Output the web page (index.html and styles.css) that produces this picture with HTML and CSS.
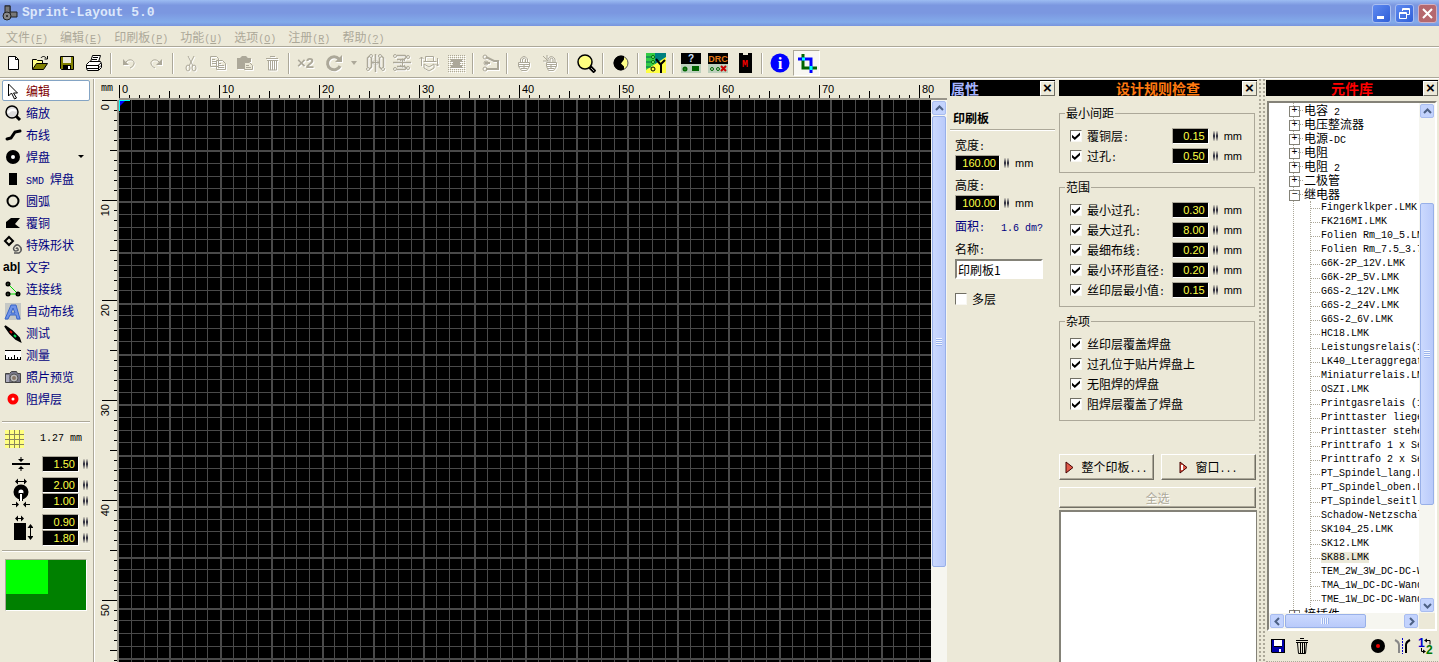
FILE: index.html
```html
<!DOCTYPE html>
<html lang="zh-CN">
<head>
<meta charset="utf-8">
<title>Sprint-Layout 5.0</title>
<link rel="stylesheet" href="styles.css">
</head>
<body>
<div class="app">
  <header class="titlebar">
    <svg class="app-icon" width="16" height="16" viewBox="0 0 16 16"><path d="M3 1h5v6h7v5H8" fill="#777" stroke="#222"/><rect x="3" y="1" width="5" height="8" fill="#777" stroke="#222"/><circle cx="5" cy="11" r="4" fill="#888" stroke="#222"/><circle cx="5" cy="11" r="1" fill="#222"/></svg>
    <h1>Sprint-Layout 5.0</h1>
    <div class="window-buttons">
      <button aria-label="最小化"><svg width="17" height="17"><path d="M4 11h7v3H4z" fill="#fff"/></svg></button>
      <button aria-label="还原"><svg width="17" height="17" fill="none" stroke="#fff"><path d="M6.500 6V3.500h7v6H11M6 4.500h8M3.500 7.500h7v6h-7zM3 8.500h8"/></svg></button>
      <button class="win-close" aria-label="关闭"><svg width="17" height="17" stroke="#fff" stroke-width="2"><path d="M4 4l9 9M13 4l-9 9"/></svg></button>
    </div>
  </header>

  <nav class="menubar">
    <button>文件<span class="lat">(<u>F</u>)</span></button>
    <button>编辑<span class="lat">(<u>E</u>)</span></button>
    <button>印刷板<span class="lat">(<u>P</u>)</span></button>
    <button>功能<span class="lat">(<u>U</u>)</span></button>
    <button>选项<span class="lat">(<u>O</u>)</span></button>
    <button>注册<span class="lat">(<u>R</u>)</span></button>
    <button>帮助<span class="lat">(<u>?</u>)</span></button>
  </nav>

  <div class="toolbar">
    <button aria-label="新建"><svg viewBox="0 0 20 20"><path d="M5.500 3.500h7l3 3v10h-10z" fill="#fff" stroke="#000"/><path d="M12.500 3.500v3h3" fill="none" stroke="#000"/></svg></button>
    <button aria-label="打开"><svg viewBox="0 0 20 20"><path d="M2.500 16V6.500h4l1 1h5v3" fill="#ff8" stroke="#000"/><path d="M2.500 16.500l4-6h11l-4 6z" fill="#808000" stroke="#000"/><path d="M11 5c1-2 4-2 5 0M17.500 3v3h-3" fill="none" stroke="#000"/></svg></button>
    <button aria-label="保存"><svg viewBox="0 0 20 20"><path d="M3.500 3.500h13v13h-12l-1-1z" fill="#808000" stroke="#000"/><path d="M6 4h8v6H6z" fill="#ece9d8"/><path d="M6 12h8v4H6z"/><path d="M11 13h2v3h-2z" fill="#fff"/></svg></button>
    <button aria-label="打印"><svg viewBox="0 0 20 20" stroke="#000"><path d="M6.500 9l2-6.500h8l-2 6.500" fill="#fff"/><path d="M2.500 11.500l3-3h11l1 2v4l-3 3h-11l-1-2z" fill="#fff"/><path d="M3 12.500h11l3-2.500M3 15.500h11l3-3M14.500 12v5M9 4.500h5M8 6.500h5" fill="none"/></svg></button>
    <span class="sep"></span>
    <button disabled aria-label="撤销"><svg class="off" viewBox="0 0 20 20"><path d="M4 6v6h6z" fill="#aca899"/><path d="M7 9c3-4 9-2 8 2q-1 3-4 4" class="ln"/></svg></button>
    <button disabled aria-label="重做"><svg class="off" viewBox="0 0 20 20"><path d="M16 6v6h-6z" fill="#aca899"/><path d="M13 9C10 5 4 7 5 11q1 3 4 4" class="ln"/></svg></button>
    <span class="sep"></span>
    <button disabled aria-label="剪切"><svg class="off" viewBox="0 0 20 20"><path d="M7 3l5 10M13 3L8 13" class="ln"/><ellipse cx="7" cy="15" rx="2" ry="3" class="ln"/><ellipse cx="13" cy="15" rx="2" ry="3" class="ln"/></svg></button>
    <button disabled aria-label="复制"><svg class="off" viewBox="0 0 20 20"><path d="M2.500 3.500h6l2 2v8h-8zM8.500 7.500h6l3 3v6h-9zM4 6.500h3M4 8.500h4M4 10.500h4M10 10.500h3M10 12.500h6M10 14.500h6" class="ln"/></svg></button>
    <button disabled aria-label="粘贴"><svg class="off" viewBox="0 0 20 20"><path d="M2 5h3l2-2h4l2 2h3v4h-5v7H2z" fill="#aca899"/><path d="M9.500 9.500h5l3 3v4h-8z" fill="#ece9d8" stroke="#aca899"/><path d="M11 12.500h3M11 14.500h5" class="ln"/></svg></button>
    <button disabled aria-label="删除"><svg class="off" viewBox="0 0 20 20"><path d="M8 3.500h5M4 5.500h12M5 7.500h11M6.500 8v9h8V8M8.500 8v9M10.500 8v9M12.500 8v9" class="ln"/></svg></button>
    <span class="sep"></span>
    <button disabled aria-label="复制两份"><svg class="off" viewBox="0 0 20 20"><text x="0" y="15" class="x2">×2</text></svg></button>
    <button disabled aria-label="旋转"><svg class="off" viewBox="0 0 20 20"><path d="M15 6a6.500 6.500 0 1 0 1 7" class="ln" stroke-width="3"/><path d="M11 9h7V2z" fill="#aca899"/></svg></button>
    <button disabled class="drop" aria-label="旋转选项"><svg viewBox="0 0 8 20"><path d="M1 8h6l-3 4z" fill="#aca899"/></svg></button>
    <button disabled aria-label="水平镜像"><svg class="off" viewBox="0 0 20 20"><path d="M10.500 1v18M2.500 14V5l2-2M6.500 5v9l-2 2M18.500 14V5l-2-2M14.500 5v9l2 2" class="ln" stroke-width="1.500"/><path d="M7 9.500h7M9 7.500l-2 2 2 2M12 7.500l2 2-2 2" class="ln"/><circle cx="6" cy="3" r="1.500" class="ln"/><circle cx="15" cy="3" r="1.500" class="ln"/><circle cx="3" cy="16" r="1.500" class="ln"/><circle cx="18" cy="16" r="1.500" class="ln"/></svg></button>
    <button disabled aria-label="垂直镜像"><svg class="off" viewBox="0 0 20 20"><path d="M1 9.500h18M5 2.500h8l2 2M5 6.500h7l2-2M5 16.500h8l2-2M5 13.500h7l2 1" class="ln" stroke-width="1.500"/><path d="M10.500 6v8M8 8l2.500-2 2.500 2M8 12l2.500 2 2.500-2" class="ln"/><circle cx="3" cy="3" r="1.500" class="ln"/><circle cx="16" cy="4" r="1.500" class="ln"/><circle cx="3" cy="16" r="1.500" class="ln"/><circle cx="16" cy="15" r="1.500" class="ln"/></svg></button>
    <button disabled aria-label="换面"><svg class="off" viewBox="0 0 20 20"><path d="M6.500 3.500h8v5h-8zM2.500 13V4M.5 6l2-2 2 2M18.500 5v8M16.500 11l2 2 2-2M4.500 8.500h3M13.500 8.500h4M5 11l5 3 5-3v4l-5 3-5-3z" class="ln"/></svg></button>
    <button disabled aria-label="阵列"><svg class="off" viewBox="0 0 20 20"><path d="M2 2.500h17M2 4.500h17M2 6.500h17M2 8.500h17M2 10.500h17M2 12.500h17M2 14.500h17M2 16.500h17M2 18.500h17" stroke="#aca899" stroke-dasharray="1 1"/><path d="M5 6h11v3H5zM5 12h11v3H5z" fill="#aca899"/><path d="M7 9h7v3H7z" fill="#aca899"/></svg></button>
    <span class="sep"></span>
    <button disabled aria-label="自动连线"><svg class="off" viewBox="0 0 20 20"><path d="M5 4l8 4h4v8H5M4 10h5" class="ln" stroke-width="2"/><circle cx="4" cy="4" r="2" class="ln"/><circle cx="5" cy="10" r="2" class="ln"/><circle cx="4" cy="16" r="2" class="ln"/></svg></button>
    <span class="sep narrow"></span>
    <button disabled aria-label="锁定"><svg class="off" viewBox="0 0 20 20"><path d="M6.500 9V6q3.500-5 7 0v3M8.500 9V6q2-2 3 0v3M4.500 9.500h11v4l-3 4h-5l-3-4zM5 11.500h10M5 13.500h10M7 15.500h6M10 11v4" class="ln"/></svg></button>
    <button disabled aria-label="解锁"><svg class="off" viewBox="0 0 20 20"><path d="M7 9V6q3-5 7 0v3M9 9V6q2-2 3 0v3M5.500 9.500h10v4l-3 4h-5l-2-4zM6 11.500h9M6 13.500h9M7 15.500h6M10 11v4M2 3l5 5M2 8h4M6 2v4" class="ln"/></svg></button>
    <span class="sep"></span>
    <button aria-label="缩放"><svg viewBox="0 0 20 20"><path d="M14 14l5 5" stroke="#000" stroke-width="4"/><path d="M15 15l3 3" stroke="#aaa"/><circle cx="9" cy="9" r="7" fill="#ffff80" stroke="#000" stroke-width="1.500"/></svg></button>
    <span class="sep"></span>
    <button aria-label="对比度"><svg viewBox="0 0 20 20"><circle cx="10" cy="10" r="7" fill="#ff8" stroke="#555"/><path d="M10 2.500a7.500 7.500 0 1 0 0 15l3-1v-3l-3-3 3-4V3z"/></svg></button>
    <span class="sep"></span>
    <button aria-label="自动布线"><svg viewBox="0 0 20 20"><path d="M0 0h20v20H0z" fill="#008080"/><path d="M0 0h9v12l-9 8z" fill="#3c4"/><path d="M20 4v16H0v-3z" fill="#ff4"/><path d="M0 4h5M0 9h5M0 14h5" stroke="#065"/><path d="M19 7l-4 4v9" stroke="#000" stroke-width="2" fill="none"/><circle cx="7" cy="4" r="1.500" fill="#8f8" stroke="#060"/><circle cx="7" cy="9" r="1.500" fill="#8f8" stroke="#060"/><circle cx="7" cy="16" r="2" fill="#ff4" stroke="#000"/><path d="M10 6l5 6" stroke="#000" stroke-width="2"/></svg></button>
    <span class="sep"></span>
    <button aria-label="属性"><svg viewBox="0 0 20 20"><path d="M0 0h20v11H0z"/><path d="M0 11h20v9H0z" fill="#bcd0bc"/><text x="7" y="9" class="ico-q">?</text><circle cx="4" cy="16" r="1.500" fill="none" stroke="#060" stroke-width="2"/><path d="M11 13h7v5h-7z" fill="#006400"/></svg></button>
    <button aria-label="设计规则检查"><svg viewBox="0 0 20 20"><path d="M0 0h20v11H0z"/><path d="M0 11h20v9H0z" fill="#bcd0bc"/><text x="10" y="9" class="ico-drc">DRC</text><circle cx="4" cy="16" r="1.500" fill="none" stroke="#060"/><circle cx="10" cy="16" r="1.500" fill="none" stroke="#060"/><path d="M13 13l5 5M18 13l-5 5" stroke="#c00" stroke-width="2"/></svg></button>
    <button aria-label="元件库"><svg viewBox="0 0 20 20"><path d="M4 0h4v2h5V0h4v20H4z"/><text x="10" y="14" class="ico-m">M</text></svg></button>
    <span class="sep"></span>
    <button aria-label="信息"><svg viewBox="0 0 20 20"><circle cx="10" cy="10" r="9.500" fill="#00f"/><text x="10" y="16" class="ico-i">i</text></svg></button>
    <button class="pressed" aria-label="准线"><svg viewBox="0 0 20 20" fill="none" stroke-width="3"><path d="M6 1v14h14" stroke="#006400"/><path d="M1 6h13v14" stroke="#00f"/><path d="M5 6h3M14 13v4" stroke="#0ff"/></svg></button>
  </div>

  <main class="workspace">
    <aside class="palette">
      <div class="tools">
        <button class="active"><svg viewBox="0 0 20 20"><path d="M5.500 3v12l3-3 3 6 2-1-3-5h4z" fill="#fff" stroke="#000"/></svg>编辑</button>
        <button><svg viewBox="0 0 20 20"><path d="M12 12l5 5" stroke="#000" stroke-width="3"/><circle cx="9" cy="9" r="6" fill="#ddd" stroke="#000" stroke-width="1.500"/><path d="M5 10q3-5 8-2" stroke="#fff" stroke-width="2" fill="none"/></svg>缩放</button>
        <button><svg viewBox="0 0 20 20"><path d="M4 14l4-1 4-6 5-1" fill="none" stroke="#000" stroke-width="3" stroke-linecap="round"/></svg>布线</button>
        <button><svg viewBox="0 0 20 20"><circle cx="10" cy="10" r="4.500" fill="#fff" stroke="#000" stroke-width="5"/></svg>焊盘<svg class="caret" viewBox="0 0 8 6"><path d="M1 1h6L4 4z"/></svg></button>
        <button><svg viewBox="0 0 20 20"><path d="M6 4h8v12H6z"/></svg><span><span class="lat">SMD&nbsp;</span>焊盘</span></button>
        <button><svg viewBox="0 0 20 20"><circle cx="10" cy="10" r="5.500" fill="none" stroke="#000" stroke-width="2"/></svg>圆弧</button>
        <button><svg viewBox="0 0 20 20"><path d="M3 9l5-4h9l-5 6 5 4H3z"/></svg>覆铜</button>
        <button><svg viewBox="0 0 20 20" fill="none" stroke="#000"><path d="M6 2l4 4-4 4-4-4z" stroke-width="2"/><path d="M13 14q1-2 2 0t-3 2q-3-2 0-5t6 2q1 3-2 5h-5" stroke="#555" stroke-width="1.500"/></svg>特殊形状</button>
        <button><svg viewBox="0 0 20 20"><text x="0" y="14" class="ico-ab">ab|</text></svg>文字</button>
        <button><svg viewBox="0 0 20 20" fill="none"><path d="M5 5l10 10H5" stroke="#0d0"/><g stroke="#000" stroke-width="2"><circle cx="5" cy="5" r="1.500"/><circle cx="5" cy="15" r="1.500"/><circle cx="15" cy="15" r="1.500"/></g></svg>连接线</button>
        <button><svg viewBox="0 0 20 20"><path d="M2 2h16v17H2z" fill="#c5c8c5"/><path d="M8 4h5l4 14h-3l-1-4H7l-2 4H2zM10 7l-2 5h4z" fill="#6f93e8" stroke="#3764c8"/></svg>自动布线</button>
        <button><svg viewBox="0 0 20 20"><path d="M2 3l7 5 7 7 1 3-4-2-6-6z" stroke="#000" stroke-width="2"/><path d="M7 8l2 2" stroke="#d00" stroke-width="2"/><path d="M11 12l2 2" stroke="#0d5" stroke-width="2"/></svg>测试</button>
        <button><svg viewBox="0 0 20 20"><path d="M2 5h16v9H2z" fill="#fff"/><path d="M2 5.500h16M2 14.500h16M2.500 10v4M5.500 12v2M8.500 12v2M11.500 10v4M14.500 12v2M17.500 12v2" stroke="#000"/></svg>测量</button>
        <button><svg viewBox="0 0 20 20"><path d="M2.500 6.500h4l2-2h5l1 2h3v9h-15z" fill="#778" stroke="#444"/><circle cx="11" cy="11" r="4" fill="#bbb" stroke="#555"/><circle cx="11" cy="11" r="2" fill="#876"/><path d="M3 8h3v7H3z" fill="#aab"/></svg>照片预览</button>
        <button><svg viewBox="0 0 20 20"><circle cx="10" cy="10" r="3.500" fill="#fff" stroke="#f00" stroke-width="4"/></svg>阻焊层</button>
      </div>
      <div class="grid-setting">
        <svg width="20" height="20" viewBox="0 0 20 20"><path d="M0 1h19v18H0z" fill="#ffff80"/><path d="M0 5.500h19M0 10.500h19M0 15.500h19M4.500 1v18M9.500 1v18M14.500 1v18" stroke="#8a865c"/></svg>
        <span class="lat">1.27 mm</span>
      </div>
      <div class="sizes">
        <div class="size-row">
          <svg viewBox="0 0 24 16"><path d="M3 8h18" stroke="#000" stroke-width="2"/><path d="M12 1v3M12 12v3" stroke="#000"/><path d="M9 3h6l-3 3zM9 13h6l-3-3z"/></svg>
          <div><span class="num"><input value="1.50" aria-label="线宽"><i class="spin"></i></span></div>
        </div>
        <div class="size-row">
          <svg viewBox="0 0 24 32"><path d="M7 4.500h10M3 27.500h5M16 27.500h5" stroke="#000"/><path d="M6 4.500l3-3v6zM18 4.500l-3-3v6zM10 27.500l-3-3v6zM14 27.500l3-3v6z"/><circle cx="12" cy="15" r="5" fill="#fff" stroke="#000" stroke-width="5"/><path d="M10 16h4v8h-4z"/><path d="M11 17h2v7h-2z" fill="#fff"/></svg>
          <div><span class="num"><input value="2.00" aria-label="焊盘外径"><i class="spin"></i></span><span class="num"><input value="1.00" aria-label="焊盘内径"><i class="spin"></i></span></div>
        </div>
        <div class="size-row">
          <svg viewBox="0 0 24 32"><path d="M5 9h12v17H5zM6 4.500l3-3v6zM15 4.500l-3-3v6zM21.500 10l-3 4h6zM21.500 26l-3-4h6z"/><path d="M7 4.500h7M21.500 13v11" stroke="#000"/></svg>
          <div><span class="num"><input value="0.90" aria-label="贴片宽度"><i class="spin"></i></span><span class="num"><input value="1.80" aria-label="贴片高度"><i class="spin"></i></span></div>
        </div>
      </div>
      <div class="overview"><div class="overview-view"></div></div>
    </aside>

    <section class="editor">
      <div class="corner lat">mm</div>
      <div class="ruler-top"><svg id="ruler-x"></svg></div>
      <div class="ruler-left"><svg id="ruler-y"></svg></div>
      <div class="board"><svg id="grid"></svg></div>
      <div class="vscroll canvas-scroll">
        <button aria-label="向上"><svg viewBox="0 0 9 9"><path d="M1 6l3.500-3.500L8 6"/></svg></button>
        <div class="track"><div class="thumb"></div></div>
      </div>
    </section>

    <section class="panel props">
      <div class="panel-head"><h2>属性</h2><button aria-label="关闭属性">×</button></div>
      <h3>印刷板</h3>
      <div class="props-body">
        <label for="bw">宽度<span class="lat">:</span></label>
        <div class="num wide"><input id="bw" value="160.00"><i class="spin"></i><span>mm</span></div>
        <label for="bh">高度<span class="lat">:</span></label>
        <div class="num wide"><input id="bh" value="100.00"><i class="spin"></i><span>mm</span></div>
        <p class="area"><span>面积<span class="lat">:</span></span><span class="lat">1.6 dm?</span></p>
        <label for="bn">名称<span class="lat">:</span></label>
        <input class="name" id="bn" value="印刷板1">
        <label class="check"><input type="checkbox">多层</label>
      </div>
    </section>

    <section class="panel drc">
      <div class="panel-head"><h2>设计规则检查</h2><button aria-label="关闭设计规则检查">×</button></div>
      <div class="groups">
        <fieldset><legend>最小间距</legend>
          <div class="rule"><label class="check"><input type="checkbox" checked><span>覆铜层<span class="lat">:</span></span></label><span class="num"><input value="0.15" aria-label="覆铜层"><i class="spin"></i><span>mm</span></span></div>
          <div class="rule"><label class="check"><input type="checkbox" checked><span>过孔<span class="lat">:</span></span></label><span class="num"><input value="0.50" aria-label="过孔"><i class="spin"></i><span>mm</span></span></div>
        </fieldset>
        <fieldset><legend>范围</legend>
          <div class="rule"><label class="check"><input type="checkbox" checked><span>最小过孔<span class="lat">:</span></span></label><span class="num"><input value="0.30" aria-label="最小过孔"><i class="spin"></i><span>mm</span></span></div>
          <div class="rule"><label class="check"><input type="checkbox" checked><span>最大过孔<span class="lat">:</span></span></label><span class="num"><input value="8.00" aria-label="最大过孔"><i class="spin"></i><span>mm</span></span></div>
          <div class="rule"><label class="check"><input type="checkbox" checked><span>最细布线<span class="lat">:</span></span></label><span class="num"><input value="0.20" aria-label="最细布线"><i class="spin"></i><span>mm</span></span></div>
          <div class="rule"><label class="check"><input type="checkbox" checked><span>最小环形直径<span class="lat">:</span></span></label><span class="num"><input value="0.20" aria-label="最小环形直径"><i class="spin"></i><span>mm</span></span></div>
          <div class="rule"><label class="check"><input type="checkbox" checked><span>丝印层最小值<span class="lat">:</span></span></label><span class="num"><input value="0.15" aria-label="丝印层最小值"><i class="spin"></i><span>mm</span></span></div>
        </fieldset>
        <fieldset><legend>杂项</legend>
          <div class="rule"><label class="check"><input type="checkbox" checked>丝印层覆盖焊盘</label></div>
          <div class="rule"><label class="check"><input type="checkbox" checked>过孔位于贴片焊盘上</label></div>
          <div class="rule"><label class="check"><input type="checkbox" checked>无阻焊的焊盘</label></div>
          <div class="rule"><label class="check"><input type="checkbox" checked>阻焊层覆盖了焊盘</label></div>
        </fieldset>
      </div>
      <div class="actions">
        <button><svg width="9" height="13" viewBox="0 0 9 13"><path d="M1 1l7 5.500L1 12z" fill="#e05a48" stroke="#400"/></svg><span>整个印板<span class="lat">...</span></span></button>
        <button><svg width="9" height="13" viewBox="0 0 9 13"><path d="M1 1l7 5.500L1 12z" fill="#e05a48" stroke="#400"/><path d="M3 4v5" stroke="#fff" stroke-width="2"/></svg><span>窗口<span class="lat">...</span></span></button>
        <button class="all" disabled>全选</button>
      </div>
      <div class="results"></div>
    </section>

    <div class="splitter"></div>

    <section class="panel library">
      <div class="panel-head"><h2>元件库</h2><button aria-label="关闭元件库">×</button></div>
      <div class="tree-box">
        <ul class="tree">
          <li>电容<span class="lat">&nbsp;2</span></li>
          <li>电压整流器</li>
          <li>电源<span class="lat">-DC</span></li>
          <li>电阻</li>
          <li>电阻<span class="lat">&nbsp;2</span></li>
          <li>二极管</li>
          <li class="open">继电器
            <ul>
              <li>Fingerklkper.LMK</li>
              <li>FK216MI.LMK</li>
              <li>Folien Rm_10_5.LMK</li>
              <li>Folien Rm_7.5_3.7.LMK</li>
              <li>G6K-2P_12V.LMK</li>
              <li>G6K-2P_5V.LMK</li>
              <li>G6S-2_12V.LMK</li>
              <li>G6S-2_24V.LMK</li>
              <li>G6S-2_6V.LMK</li>
              <li>HC18.LMK</li>
              <li>Leistungsrelais(1).LMK</li>
              <li>LK40_Lteraggregat.LMK</li>
              <li>Miniaturrelais.LMK</li>
              <li>OSZI.LMK</li>
              <li>Printgasrelais (1).LMK</li>
              <li>Printtaster liegend.LMK</li>
              <li>Printtaster stehend.LMK</li>
              <li>Printtrafo 1 x Sek.LMK</li>
              <li>Printtrafo 2 x Sek.LMK</li>
              <li>PT_Spindel_lang.LMK</li>
              <li>PT_Spindel_oben.LMK</li>
              <li>PT_Spindel_seitl.LMK</li>
              <li>Schadow-Netzschalter.LMK</li>
              <li>SK104_25.LMK</li>
              <li>SK12.LMK</li>
              <li><span class="selected">SK88.LMK</span></li>
              <li>TEM_2W_3W_DC-DC-Wandler.LMK</li>
              <li>TMA_1W_DC-DC-Wandler.LMK</li>
              <li>TME_1W_DC-DC-Wandler.LMK</li>
            </ul>
          </li>
          <li>接插件</li>
        </ul>
        <div class="vscroll tree-scroll">
          <button aria-label="向上"><svg viewBox="0 0 9 9"><path d="M1 6l3.500-3.500L8 6"/></svg></button>
          <div class="track"><div class="thumb"></div></div>
          <button aria-label="向下"><svg viewBox="0 0 9 9"><path d="M1 3l3.500 3.500L8 3"/></svg></button>
        </div>
        <div class="hscroll">
          <button aria-label="向左"><svg viewBox="0 0 9 9"><path d="M6 1L2.500 4.500 6 8"/></svg></button>
          <div class="track"><div class="thumb"></div></div>
          <button aria-label="向右"><svg viewBox="0 0 9 9"><path d="M3 1l3.500 3.500L3 8"/></svg></button>
        </div>
        <div class="scroll-corner"></div>
      </div>
      <div class="library-tools">
        <button aria-label="保存元件"><svg viewBox="0 0 20 20"><path d="M3 3h14v14H4l-1-1z"/><path d="M4 4h2v7h8V4h2v12H4z" fill="#00a"/><path d="M6 4h8v6H6zM11 13h2v3h-2z" fill="#fff"/></svg></button>
        <button aria-label="删除元件"><svg viewBox="0 0 20 20" fill="none" stroke="#000"><path d="M8 2.500h4M4 4.500h12M4 6.500h12M5.500 7l1 10.500h7l1-10.500M8.500 7v10M10.500 7v10M12.500 7v10"/></svg></button>
        <span class="grow"></span>
        <button aria-label="圆点"><svg viewBox="0 0 20 20"><circle cx="10" cy="10" r="7"/><circle cx="10" cy="10" r="2" fill="#e00"/></svg></button>
        <button aria-label="镜像"><svg viewBox="0 0 20 20" fill="none"><path d="M3 4q4 2 4 5v8" stroke="#888" stroke-width="2"/><path d="M18 4q-4 2-4 5v8" stroke="#000" stroke-width="2"/><path d="M10.500 2v16" stroke="#00c" stroke-dasharray="2 1"/></svg></button>
        <button aria-label="换面元件"><svg viewBox="0 0 20 20"><text x="2" y="11" class="ico-1">1</text><text x="10" y="18" class="ico-2">2</text><path d="M10 4.500h4v4M5.500 12v3.500h3" fill="none" stroke="#000"/><path d="M8 4.500l3-2v4zM10 15.500l-3-2v4z"/></svg></button>
      </div>
    </section>
  </main>
</div>
<script src="board.js"></script>
</body>
</html>
```

FILE: styles.css
```css
* { box-sizing: border-box; }
body {
  margin: 0;
  background: #ece9d8;
  color: #000;
  font: 12px/14px "Noto Sans CJK SC", "Liberation Sans", sans-serif;
  overflow: hidden;
}
button, input { font: inherit; color: inherit; margin: 0; }
button { padding: 0; border: 0; background: none; }
h1, h2, h3, p, ul { margin: 0; padding: 0; }
svg { display: block; flex: none; }
.lat { font-family: "Liberation Mono", monospace; font-size: 10px; }
span.lat { line-height: 0; }
.app { height: 100vh; display: flex; flex-direction: column; }

/* Title bar */
.titlebar {
  height: 26px; flex: none; display: flex; align-items: center; gap: 4px;
  padding: 0 2px;
  background: linear-gradient(#9cbcf2, #7b97e0 20%, #7b97e0 50%, #83abea 85%, #7894dd);
}
.titlebar h1 { flex: 1; color: #dce8fb; font: bold 13px/16px "Liberation Mono", monospace; }
.window-buttons { display: flex; gap: 4px; }
.window-buttons button {
  width: 19px; height: 19px; border: 1px solid #a9bef0; border-radius: 3px;
  background: linear-gradient(135deg, #5f8af0, #2f5fd8);
}
.window-buttons .win-close { background: #b5686e; border-color: #d0b0c4; }

/* Menu and toolbar */
.menubar {
  height: 22px; flex: none; display: flex; align-items: center; gap: 12px;
  padding: 0 6px; color: #aca899;
  border-bottom: 1px solid #fff; box-shadow: inset 0 -1px #aca899;
}
.toolbar {
  height: 31px; flex: none; display: flex; align-items: center; margin-left: -1px;
  border-bottom: 1px solid #fff; box-shadow: inset 0 -1px #aca899;
}
.toolbar button { width: 27px; height: 26px; display: flex; align-items: center; justify-content: center; flex: none; }
.toolbar svg { width: 20px; height: 20px; }
.toolbar .drop { width: 14px; }
.toolbar .drop svg { width: 8px; }
.toolbar .pressed { background: #f8f7f2; border: 1px solid; border-color: #aca899 #fff #fff #aca899; }
.sep { width: 8px; height: 21px; flex: none; background: linear-gradient(90deg, #aca899 50%, #fff 50%) center / 2px 100% no-repeat; }
.sep.narrow { width: 6px; }
.off { filter: drop-shadow(1px 1px 0 #fff); }
.ln { fill: none; stroke: #aca899; }
.x2 { font: bold 15px "Liberation Sans"; fill: #aca899; }
.ico-q { font: bold 10px "Liberation Sans"; fill: #cfe0ff; }
.ico-drc { font: bold 9px "Liberation Sans"; fill: #e07818; text-anchor: middle; }
.ico-m { font: bold 10px "Liberation Mono"; fill: #e00; text-anchor: middle; }
.ico-i { font: bold 17px "Liberation Serif"; fill: #fff; text-anchor: middle; }
.ico-ab { font: bold 12px "Liberation Sans"; }
.ico-1 { font: bold 12px "Liberation Sans"; fill: #00c; }
.ico-2 { font: bold 12px "Liberation Sans"; fill: #070; }

.workspace { flex: 1; min-height: 0; display: flex; }

/* Left palette */
.palette { width: 95px; flex: none; padding: 1px 4px 0 2px; border-right: 1px solid #fff; box-shadow: inset -1px 0 #aca899; }
.tools { display: flex; flex-direction: column; gap: 1px; }
.tools button {
  height: 21px; display: flex; align-items: center; width: 88px;
  color: #000080; border: 1px solid transparent; border-radius: 2px;
}
.tools svg { width: 20px; height: 20px; margin-right: 3px; }
.tools .caret { width: 8px; height: 6px; margin: 0 4px 0 auto; }
.tools .active { background: #fff; border-color: #84a4c4; color: #800000; }
.grid-setting {
  margin-top: 12px; height: 31px; display: flex; align-items: center; justify-content: space-between;
  padding: 3px 8px 0 3px; border-top: 1px solid #aca899; box-shadow: inset 0 1px #fff;
}
.sizes { display: flex; flex-direction: column; gap: 5px; padding: 4px 0; border-bottom: 1px solid #aca899; box-shadow: 0 1px #fff; }
.size-row { display: flex; justify-content: space-between; padding: 0 2px 0 7px; }
.size-row > svg { width: 24px; }
.num { display: flex; align-items: center; font: 11px/14px "Liberation Sans", sans-serif; }
.num input {
  width: 37px; height: 16px; padding: 0 3px 0 0; text-align: right;
  background: #000; color: #ff4; border: 1px solid; border-color: #aca899 #fff #fff #aca899;
}
.spin {
  width: 5px; height: 10px; margin-left: 4px; flex: none;
  background:
    linear-gradient(#d8d5c6, #223 50%, #d8d5c6) 0 0 / 2px 100% no-repeat,
    linear-gradient(#d8d5c6, #223 50%, #d8d5c6) 3px 0 / 2px 100% no-repeat;
}
.overview { margin: 8px 3px 0 3px; height: 52px; background: #008000; border: 1px solid; border-color: #aca899 #fff #fff #aca899; }
.overview-view { width: 52%; height: 68%; background: #0f0; }

/* Rulers and board */
.editor { flex: 1; min-width: 0; display: grid; grid-template: 21px 1fr / 24px 1fr 16px; padding-right: 3px; }
.editor svg text { font: 11px "Liberation Sans", sans-serif; }
.corner { padding: 3px 0 0 6px; }
.ruler-top { grid-column: 2 / 4; border-bottom: 2px solid #98958a; overflow: hidden; }
.ruler-left { border-right: 2px solid #98958a; overflow: hidden; }
.ruler-top svg, .ruler-left svg, .board svg { width: 100%; height: 100%; }
.board { background: #000; overflow: hidden; min-height: 0; }

/* Scroll bars */
.vscroll, .hscroll { display: flex; background: #f6f6f0; padding: 1px; gap: 1px; }
.vscroll { flex-direction: column; }
.vscroll button, .hscroll button {
  width: 14px; height: 14px; flex: none; display: flex; align-items: center; justify-content: center;
  background: #c3d3fd; border: 1px solid #a9bdf0; border-radius: 2px;
}
.vscroll svg, .hscroll svg { width: 9px; height: 9px; fill: none; stroke: #4d6185; stroke-width: 2; }
.track { flex: 1; display: grid; min-height: 0; min-width: 0; }
.thumb {
  border: 1px solid #98b0e8; border-radius: 2px;
  background:
    repeating-linear-gradient(#f0f5ff 0 1px, #9cb4ec 1px 2px) center / 6px 8px no-repeat,
    linear-gradient(90deg, #cbd9fe, #b9cafa);
}
.vscroll .thumb { grid-row: 2; }
.hscroll .thumb {
  grid-column: 2;
  background:
    repeating-linear-gradient(90deg, #f0f5ff 0 1px, #9cb4ec 1px 2px) center / 8px 6px no-repeat,
    linear-gradient(#cbd9fe, #b9cafa);
}
.canvas-scroll .track { grid-template-rows: 0fr 452fr 94fr; }
.tree-scroll .track { grid-template-rows: 84fr 300fr 92fr; }
.hscroll .track { grid-template-columns: 0fr 80fr 37fr; }
.scroll-corner { background: #ece9d8; }

/* Docked panels */
.panel { flex: none; display: flex; flex-direction: column; padding-top: 1px; }
.panel-head { height: 16px; flex: none; display: flex; align-items: center; background: #000; }
.panel-head h2 { flex: 1; padding-left: 15px; font-size: 14px; line-height: 16px; text-align: center; }
.panel-head button {
  width: 15px; height: 15px; background: #ece9d8;
  border: 1px solid; border-color: #fff #716f64 #716f64 #fff;
  font: bold 15px/12px "Liberation Sans", sans-serif;
}
.props { width: 105px; margin-right: 4px; }
.props .panel-head h2 { color: #a6b4ff; text-align: left; padding-left: 1px; }
.props h3 { font-size: 12px; line-height: 14px; padding: 15px 3px 4px; border-bottom: 1px solid #aca899; box-shadow: 0 1px #fff; }
.props-body { display: flex; flex-direction: column; padding: 8px 12px 0 5px; }
.props-body > label { line-height: 14px; margin-bottom: 3px; }
.props-body .num { margin-bottom: 7px; }
.num.wide input { width: 45px; }
.num > span { margin-left: 6px; }
.props-body .area { display: flex; gap: 16px; align-items: baseline; color: #000080; margin: 1px 0 9px; white-space: nowrap; }
.name { width: 88px; height: 20px; padding: 0 1px; background: #fff; border: 2px solid; border-color: #848278 #fff #fff #848278; margin-bottom: 13px; }
.check { display: flex; align-items: center; white-space: nowrap; }
.check input {
  appearance: none; width: 12px; height: 12px; margin-right: 5px; background: #fff; flex: none;
  border: 1px solid; border-color: #716f64 #f8f7f2 #f8f7f2 #716f64;
  display: grid; place-items: center;
}
.check input:checked::before {
  content: ""; width: 8px; height: 8px; background: #000;
  clip-path: polygon(0 35%, 35% 65%, 100% 5%, 100% 40%, 35% 100%, 0 70%);
}

.drc { width: 198px; }
.drc h2 { color: #ff7a10; }
.groups { display: flex; flex-direction: column; gap: 7px; padding: 10px 2px 0 0; }
fieldset { margin: 0; min-width: 0; padding: 6px 12px 6px 10px; border: 1px solid #aca899; }
legend { padding: 0 1px; margin-left: -5px; line-height: 14px; }
.rule { height: 20px; display: flex; align-items: center; justify-content: space-between; }
.actions { display: grid; grid-template-columns: 1fr 1fr; gap: 7px; padding: 33px 1px 2px 0; }
.actions button {
  height: 26px; display: flex; align-items: center; justify-content: center; gap: 7px;
  border: 1px solid; border-color: #fff #716f64 #716f64 #fff; box-shadow: inset -1px -1px #aca899;
}
.actions .all { grid-column: 1 / 3; height: 21px; color: #aca899; text-shadow: 1px 1px #fff; }
.results { flex: 1; background: #fff; border: solid; border-width: 2px 1px 0 2px; border-color: #848278; }

.splitter { width: 9px; flex: none; background: linear-gradient(#aca899, #aca899) 0 0 / 1px 1px; background: radial-gradient(circle at 1px 1px, #aca899 1px, transparent 1px) 2px 0 / 4px 4px; }

/* Component library */
.library { width: 172px; margin-right: 1px; }
.library h2 { color: #f00; }
.tree-box {
  flex: 1; min-height: 0; margin: 5px 1px 0; background: #fff;
  border: 2px solid; border-color: #848278 #fff #fff #848278;
  display: grid; grid-template: minmax(0, 1fr) 16px / minmax(0, 1fr) 16px;
}
.tree { overflow: hidden; min-height: 0; background: linear-gradient(#aca899 50%, transparent 50%) 24px 0 / 1px 2px repeat-y; }
.tree li { list-style: none; line-height: 14px; padding-left: 35px; white-space: nowrap; position: relative; }
.tree > li::before {
  content: "+"; position: absolute; left: 20px; top: 3px; width: 9px; height: 9px;
  border: 1px solid #848278; background: #fff; font: 10px/7px "Liberation Mono", monospace; text-align: center;
}
.tree > li.open::before { content: "−"; }
.tree > li::after { content: ""; position: absolute; left: 29px; top: 7px; width: 5px; border-top: 1px dotted #aca899; }
.tree ul { margin-left: 6px; border-left: 1px dotted #aca899; font: 10px/14px "Liberation Mono", monospace; }
.tree ul li { padding-left: 10px; }
.tree ul li::before { content: ""; position: absolute; left: 0; top: 7px; width: 9px; border-top: 1px dotted #aca899; }
.selected { background: #ece9d8; }
.hscroll { grid-column: 1; }
.library-tools { display: flex; align-items: center; gap: 3px; height: 31px; padding: 0 1px 0 2px; border-bottom: 1px dotted #aca899; }
.library-tools button { width: 21px; }
.library-tools svg { width: 20px; height: 20px; }
.grow { flex: 1; }
```

FILE: board.js
```js
const PX_PER_MM = 10;
const GRID_MM = 1.27;

function rect(x, y, w, h, fill) {
  return `<rect x="${x}" y="${y}" width="${w}" height="${h}" fill="${fill}"/>`;
}

function tickLength(mm) {
  if (mm % 10 === 0) return 15;
  return mm % 5 === 0 ? 7 : 3;
}

function drawRulers() {
  const rx = document.getElementById("ruler-x");
  const ry = document.getElementById("ruler-y");
  const width = document.getElementById("grid").clientWidth;
  const height = ry.clientHeight;
  let top = "", left = "";
  for (let mm = 0; mm * PX_PER_MM < width; mm++) {
    const len = Math.min(tickLength(mm), 13);
    top += rect(mm * PX_PER_MM, 19 - len, 1, len, "#000");
    if (mm % 10 === 0) top += `<text x="${mm * PX_PER_MM + 3}" y="14">${mm}</text>`;
  }
  for (let mm = 0; mm * PX_PER_MM < height; mm++) {
    const y = mm * PX_PER_MM, len = tickLength(mm);
    left += rect(22 - len, y, len, 1, "#000");
    if (mm % 10 === 0) left += `<text transform="translate(14 ${y + 4}) rotate(-90)" text-anchor="end">${mm}</text>`;
  }
  rx.innerHTML = top;
  ry.innerHTML = left;
}

function drawGrid() {
  const svg = document.getElementById("grid");
  const w = svg.clientWidth, h = svg.clientHeight, step = GRID_MM * PX_PER_MM;
  let out = "";
  for (let i = 1; i * step < Math.max(w, h); i++) {
    const p = Math.floor(i * step), size = i % 4 === 0 ? 2 : 1;
    out += rect(p, 0, size, h, "#4a4a4a") + rect(0, p, w, size, "#4a4a4a");
  }
  out += '<path d="M0 0h7L0 7z" fill="#00f"/><path d="M0 0h11v1H1v10H0z" fill="#0ff"/>';
  svg.innerHTML = out;
}

function draw() { drawRulers(); drawGrid(); }
draw();
window.addEventListener("resize", draw);
```
